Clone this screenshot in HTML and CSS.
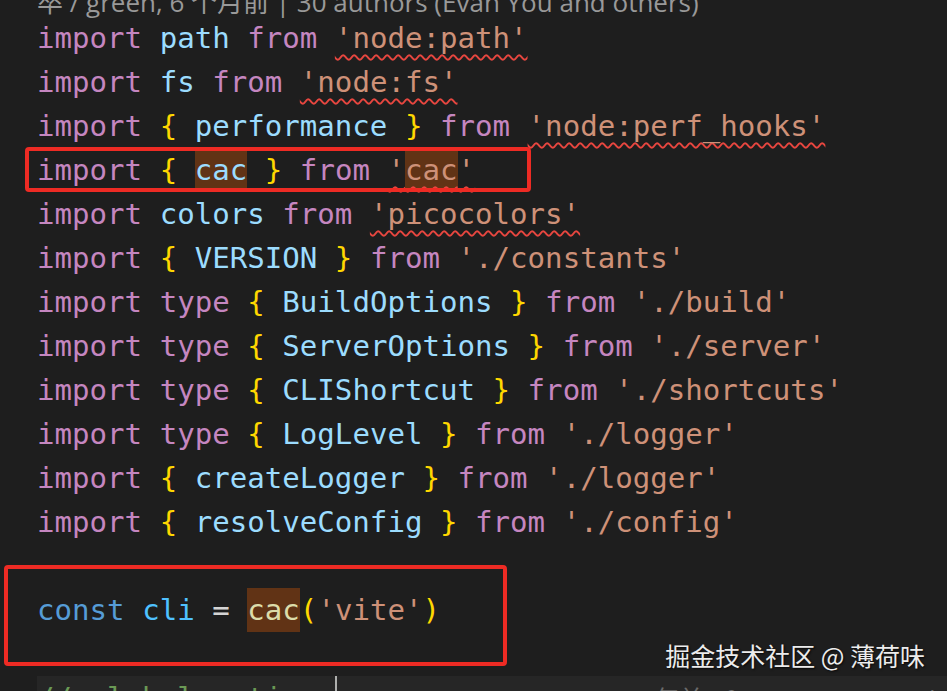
FILE: index.html
```html
<!DOCTYPE html>
<html lang="zh-CN">
<head>
<meta charset="utf-8">
<title>cli.ts</title>
<link rel="stylesheet" href="styles.css">
</head>
<body>
<div class="editor">
  <div class="codelens">卒 / green, 6 个月前 | 30 authors (Evan You and others)</div>
  <div class="code">
    <div class="line"><span class="kw">import</span> <span class="id">path</span> <span class="kw">from</span> <span class="str err">'node:path'</span></div>
    <div class="line"><span class="kw">import</span> <span class="id">fs</span> <span class="kw">from</span> <span class="str err">'node:fs'</span></div>
    <div class="line"><span class="kw">import</span> <span class="br">{</span> <span class="id">performance</span> <span class="br">}</span> <span class="kw">from</span> <span class="str err">'node:perf_hooks'</span></div>
    <div class="line"><span class="kw">import</span> <span class="br">{</span> <span class="id hl">cac</span> <span class="br">}</span> <span class="kw">from</span> <span class="str err">'<span class="hl">cac</span>'</span></div>
    <div class="line"><span class="kw">import</span> <span class="id">colors</span> <span class="kw">from</span> <span class="str err">'picocolors'</span></div>
    <div class="line"><span class="kw">import</span> <span class="br">{</span> <span class="id">VERSION</span> <span class="br">}</span> <span class="kw">from</span> <span class="str">'./constants'</span></div>
    <div class="line"><span class="kw">import</span> <span class="kw">type</span> <span class="br">{</span> <span class="id">BuildOptions</span> <span class="br">}</span> <span class="kw">from</span> <span class="str">'./build'</span></div>
    <div class="line"><span class="kw">import</span> <span class="kw">type</span> <span class="br">{</span> <span class="id">ServerOptions</span> <span class="br">}</span> <span class="kw">from</span> <span class="str">'./server'</span></div>
    <div class="line"><span class="kw">import</span> <span class="kw">type</span> <span class="br">{</span> <span class="id">CLIShortcut</span> <span class="br">}</span> <span class="kw">from</span> <span class="str">'./shortcuts'</span></div>
    <div class="line"><span class="kw">import</span> <span class="kw">type</span> <span class="br">{</span> <span class="id">LogLevel</span> <span class="br">}</span> <span class="kw">from</span> <span class="str">'./logger'</span></div>
    <div class="line"><span class="kw">import</span> <span class="br">{</span> <span class="id">createLogger</span> <span class="br">}</span> <span class="kw">from</span> <span class="str">'./logger'</span></div>
    <div class="line"><span class="kw">import</span> <span class="br">{</span> <span class="id">resolveConfig</span> <span class="br">}</span> <span class="kw">from</span> <span class="str">'./config'</span></div>
    <div class="line"></div>
    <div class="line"><span class="storage">const</span> <span class="const">cli</span> <span class="op">=</span> <span class="fn hl">cac</span><span class="br">(</span><span class="str">'vite'</span><span class="br">)</span></div>
    <div class="line"></div>
    <div class="line current"><span class="cmt">// global options</span><span class="cursor"></span><span class="ghost">Evan You, 4年前 • feat: support cac cli options</span></div>
  </div>
  <div class="mark mark-import"></div>
  <div class="mark mark-const"></div>
  <div class="watermark">掘金技术社区 @ 薄荷味</div>
</div>
</body>
</html>
```

FILE: styles.css
```css
html, body {
  margin: 0;
  padding: 0;
  background: #1e1e1e;
  overflow: hidden;
}

.editor {
  position: relative;
  width: 947px;
  height: 691px;
  overflow: hidden;
  background: #1e1e1e;
}

.codelens {
  height: 16px;
  line-height: 5px;
  padding-left: 37px;
  font-family: "Open Sans", "Noto Sans CJK SC", sans-serif;
  font-size: 26px;
  color: #999999;
  white-space: nowrap;
}

.code {
  padding-left: 37px;
  font-family: "DejaVu Sans Mono", monospace;
  font-size: 29.1px;
  color: #d4d4d4;
}

.line {
  height: 44px;
  line-height: 44px;
  white-space: pre;
}

.kw { color: #c586c0; }
.id { color: #9cdcfe; }
.br { color: #ffd700; }
.str { color: #ce9178; }
.storage { color: #569cd6; }
.const { color: #4fc1ff; }
.op { color: #d4d4d4; }
.fn { color: #dcdcaa; }
.cmt { color: #6a9955; }

.err {
  text-decoration: underline wavy #e8463f;
  text-decoration-thickness: 2px;
  text-underline-offset: 6px;
  text-decoration-skip-ink: none;
}

.hl {
  background: #613315;
  padding: 5px 0;
}

.current {
  background: #262626;
}

.cursor {
  display: inline-block;
  width: 2px;
  height: 44px;
  vertical-align: top;
  background: #aeafad;
}

.ghost {
  margin-left: 190px;
  font-family: "Open Sans", "Noto Sans CJK SC", sans-serif;
  font-size: 24px;
  color: #6b6b6b;
}

.mark {
  position: absolute;
  border: 4px solid #ee2b24;
  border-radius: 4px;
  box-sizing: border-box;
}

.mark-import {
  left: 25px;
  top: 147px;
  width: 506px;
  height: 45px;
}

.mark-const {
  left: 4px;
  top: 565px;
  width: 503px;
  height: 101px;
}

.watermark {
  position: absolute;
  right: 22px;
  top: 638px;
  font-family: "Noto Sans CJK SC", sans-serif;
  font-size: 25px;
  line-height: 34px;
  color: #ececec;
  text-shadow: 1px 1px 2px rgba(0, 0, 0, 0.8);
  white-space: nowrap;
}
```
